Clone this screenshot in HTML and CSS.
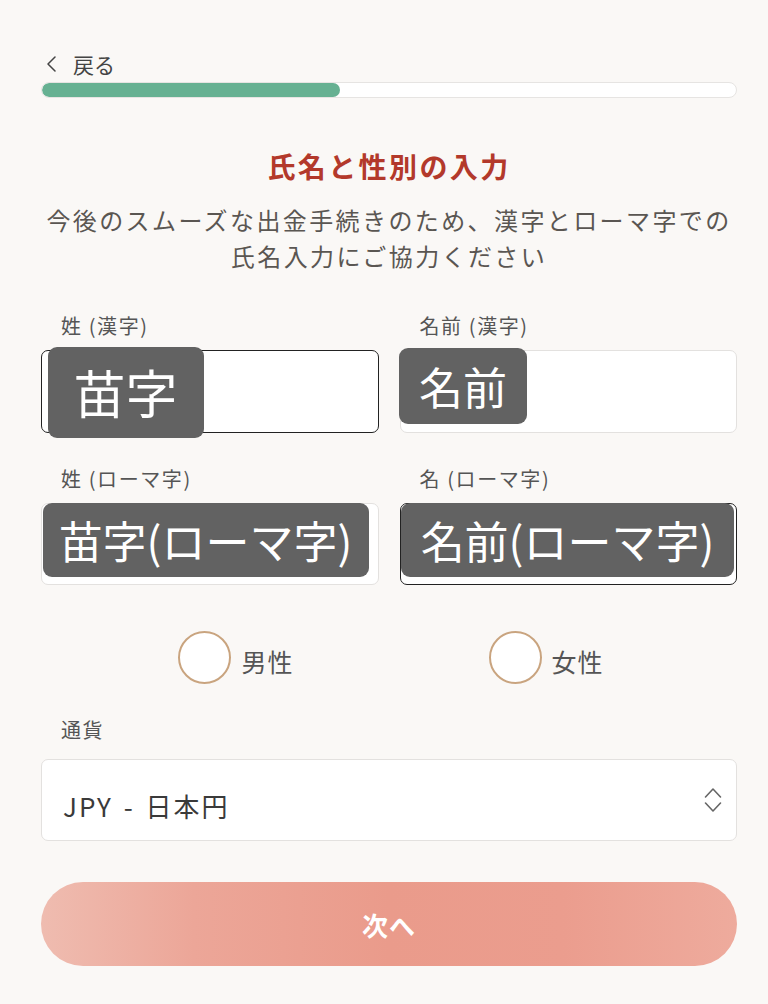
FILE: index.html
```html
<!DOCTYPE html>
<html lang="ja">
<head>
<meta charset="utf-8">
<title>氏名と性別の入力</title>
<link rel="stylesheet" href="styles.css">
</head>
<body>
<div class="page">
  <div class="back">
    <svg class="back-icon" width="12" height="16" viewBox="0 0 12 16"><polyline points="10,1 3,8 10,15" fill="none" stroke="#444" stroke-width="1.5" stroke-linecap="round" stroke-linejoin="round"/></svg>
    <span class="back-text">戻る</span>
  </div>
  <div class="progress"><div class="progress-fill" style="width:43%"></div></div>

  <h1 class="title">氏名と性別の入力</h1>
  <p class="subtitle">今後のスムーズな出金手続きのため、漢字とローマ字での<br>氏名入力にご協力ください</p>

  <div class="fields">
    <div class="field">
      <div class="label">姓 (漢字)</div>
      <div class="input focused"><span class="mask mask-a">苗字</span></div>
    </div>
    <div class="field">
      <div class="label">名前 (漢字)</div>
      <div class="input"><span class="mask mask-b">名前</span></div>
    </div>
    <div class="field">
      <div class="label">姓 (ローマ字)</div>
      <div class="input"><span class="mask mask-c">苗字(ローマ字)</span></div>
    </div>
    <div class="field">
      <div class="label">名 (ローマ字)</div>
      <div class="input focused"><span class="mask mask-d">名前(ローマ字)</span></div>
    </div>
  </div>

  <div class="radios">
    <div class="radio"><span class="circle"></span><span class="radio-label">男性</span></div>
    <div class="radio"><span class="circle"></span><span class="radio-label">女性</span></div>
  </div>

  <div class="label currency-label">通貨</div>
  <div class="select">
    <span class="select-text">JPY - 日本円</span>
    <svg class="select-icon" width="18" height="30" viewBox="0 0 18 30"><polyline points="1.5,12 9,4 16.5,12" fill="none" stroke="#666" stroke-width="1.6" stroke-linecap="round" stroke-linejoin="round"/><polyline points="1.5,18 9,26 16.5,18" fill="none" stroke="#666" stroke-width="1.6" stroke-linecap="round" stroke-linejoin="round"/></svg>
  </div>

  <div class="button">次へ</div>
</div>
</body>
</html>
```
FILE: styles.css
```css
* { box-sizing: border-box; }
html, body { margin: 0; padding: 0; }
body {
  background: #faf8f6;
  font-family: "Noto Sans CJK JP", "Noto Sans", sans-serif;
  color: #555;
}
.page {
  padding: 52px 31px 0 41px;
}
.back {
  display: flex;
  align-items: center;
  height: 24px;
  padding-left: 4px;
}
.back-icon { display: block; }
.back-text {
  margin-left: 16px;
  font-size: 21px;
  line-height: 24px;
  color: #444;
}
.progress {
  margin-top: 6px;
  height: 16px;
  border: 1px solid #e6e4e2;
  border-radius: 8px;
  background: #fff;
  overflow: hidden;
}
.progress-fill {
  height: 100%;
  background: #66b192;
  border-radius: 8px;
}
.title {
  margin: 50px 0 0;
  text-align: center;
  font-size: 28px;
  line-height: 36px;
  font-weight: 700;
  color: #b3392b;
  letter-spacing: 2.4px;
}
.subtitle {
  margin: 18px 0 0;
  text-align: center;
  font-size: 24px;
  line-height: 36px;
  letter-spacing: 2.4px;
  color: #5a5652;
  white-space: nowrap;
}
.fields {
  margin-top: 40px;
  display: grid;
  grid-template-columns: 1fr 1fr;
  column-gap: 21px;
  row-gap: 34px;
}
.label {
  font-size: 20px;
  line-height: 24px;
  padding-left: 20px;
  letter-spacing: 1.6px;
  color: #555;
}
.input {
  position: relative;
  margin-top: 12px;
  height: 83px;
  background: #fff;
  border: 1.5px solid #e3e1df;
  border-radius: 7px;
}
.field:nth-child(n+3) .input { height: 82px; }
.input.focused { border-color: #222; }
.mask {
  position: absolute;
  display: flex;
  align-items: center;
  justify-content: center;
  background: #626262;
  color: #fff;
  border-radius: 9px;
  font-size: 44px;
  line-height: 1;
  white-space: nowrap;
}
.mask-a { left: 5.5px; top: -4.5px; width: 156px; height: 91px; font-size: 52px; }
.mask-b { left: -1.5px; top: -3.5px; width: 128px; height: 76px; }
.mask-c { left: 0.5px; top: -1.5px; width: 326px; height: 74px; }
.mask-d { left: 0.5px; top: -1.5px; width: 333px; height: 74px; }
.radios {
  margin-top: 46px;
  display: flex;
  justify-content: center;
  gap: 195px;
  padding-left: 4px;
}
.radio {
  display: flex;
  align-items: center;
}
.circle {
  width: 53px;
  height: 53px;
  border: 2px solid #c9a47f;
  border-radius: 50%;
  background: #fff;
}
.radio-label {
  margin-left: 10px;
  font-size: 25px;
  line-height: 30px;
  letter-spacing: 1px;
  color: #555;
  padding-top: 6px;
}
.currency-label {
  margin-top: 34px;
}
.select {
  margin-top: 17px;
  height: 82px;
  background: #fff;
  border: 1.5px solid #e3e1df;
  border-radius: 7px;
  display: flex;
  align-items: center;
  justify-content: space-between;
  padding: 0 14px 0 21px;
}
.select-text {
  font-size: 26px;
  line-height: 30px;
  letter-spacing: 2px;
  word-spacing: 3px;
  color: #3a3a3a;
  margin-top: 12px;
}
.select-icon { display: block; }
.button {
  margin-top: 41px;
  height: 84px;
  border-radius: 42px;
  background: linear-gradient(to right, #efbcb0 0%, #eca698 22%, #ea9b8b 50%, #eb9d8e 75%, #eeab9d 100%);
  color: #fff;
  font-size: 26px;
  font-weight: 700;
  letter-spacing: 1px;
  display: flex;
  align-items: center;
  justify-content: center;
}
```
